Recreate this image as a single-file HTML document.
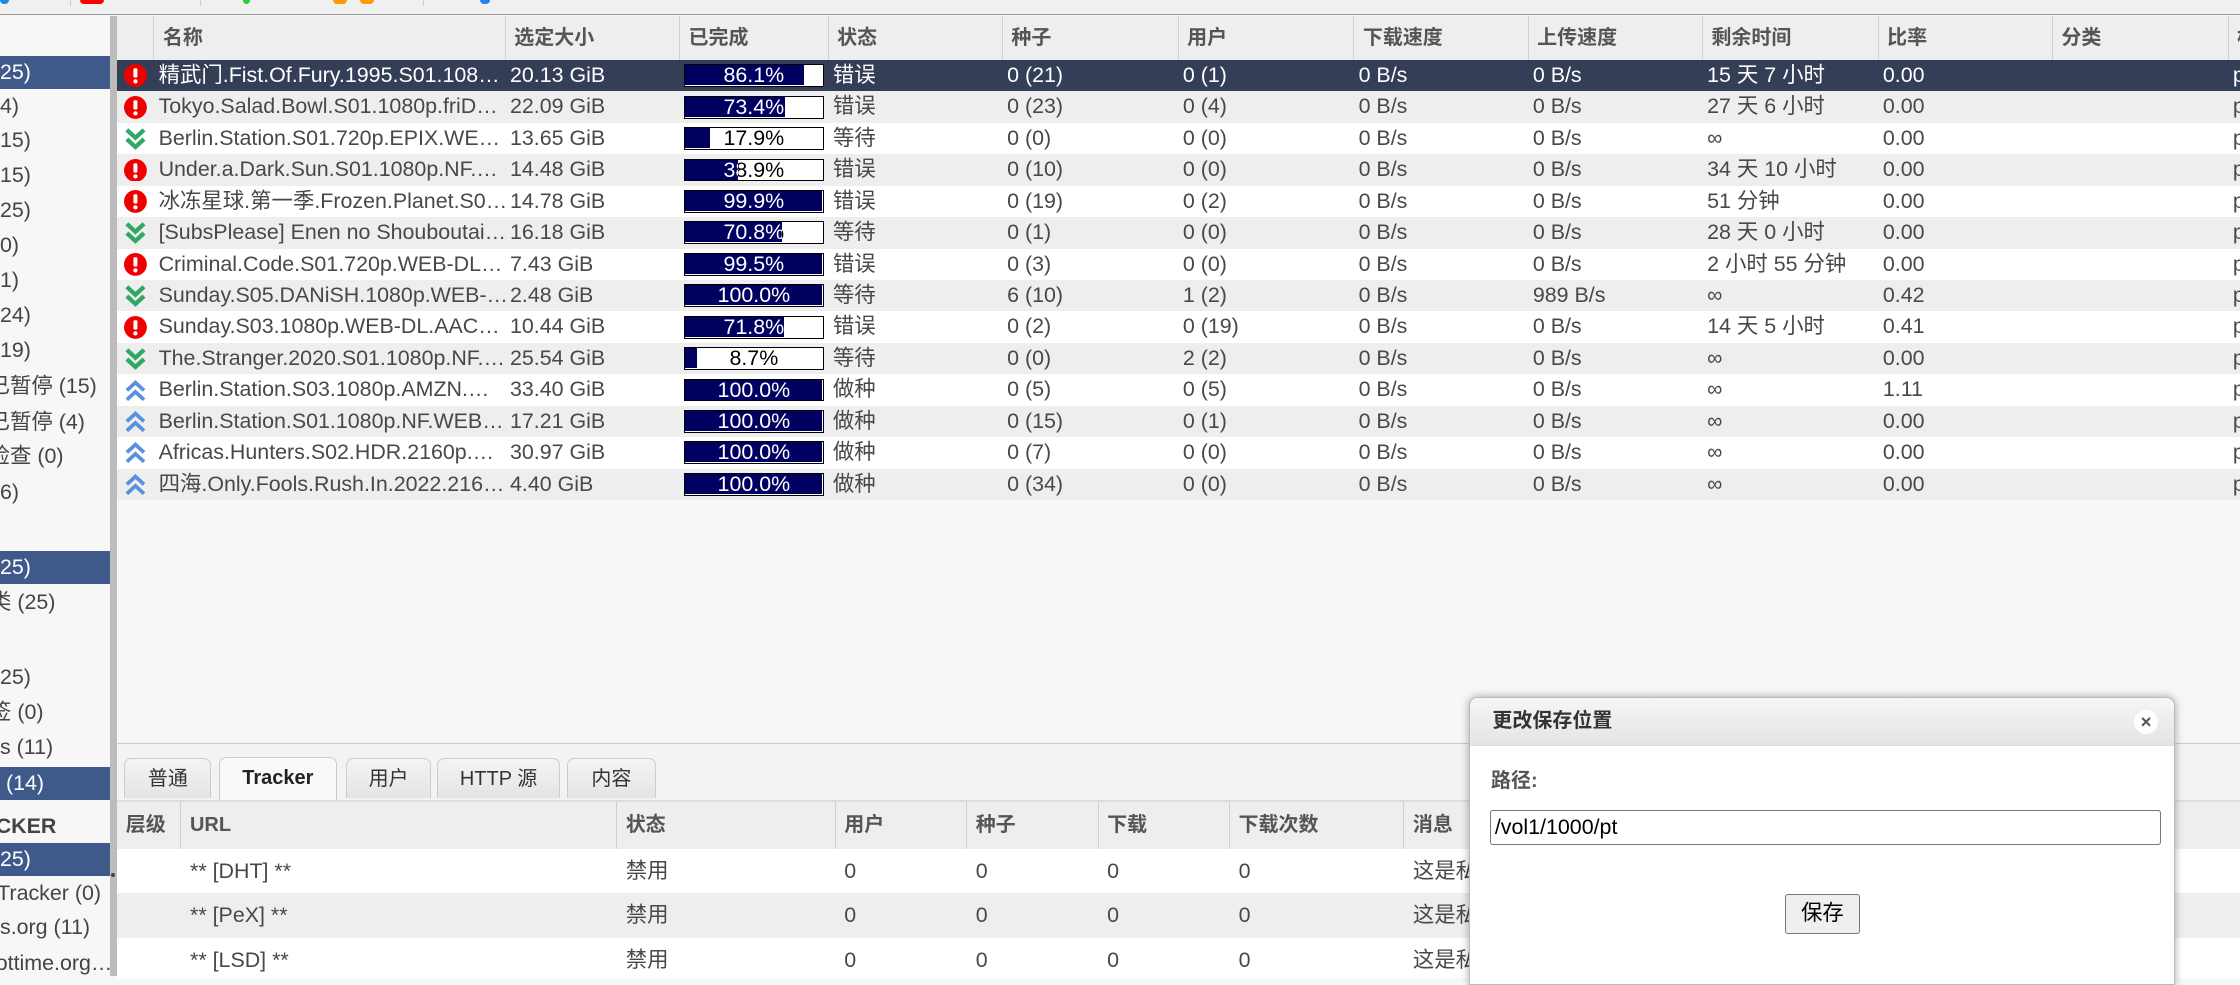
<!DOCTYPE html>
<html><head><meta charset="utf-8">
<style>
html,body{margin:0;padding:0;}
body{width:1568px;height:683px;overflow:hidden;zoom:1.428571;position:relative;background:#f7f7f7;font-family:"Liberation Sans","Noto Sans CJK SC",sans-serif;font-size:15px;color:#484848;}
.abs{position:absolute;}
#tb{left:0;top:0;width:1568px;height:10px;background:#f0f0f0;border-bottom:1px solid #999;}
#side{left:0;top:11px;width:77px;height:672px;background:#f7f7f7;overflow:hidden;}
#split{left:77px;top:11px;width:5px;height:672px;background:#bcbcbc;}
.si{position:absolute;left:0;width:77px;height:23px;line-height:23px;white-space:nowrap;color:#444;}
.si.sel{background:#3f5a8a;color:#fff;}
#main{left:82px;top:11px;width:1486px;height:509px;background:#f7f7f7;overflow:hidden;}
.hd{position:absolute;top:0;height:31px;line-height:31px;font-weight:bold;color:#555;background:#eee;border-right:1px solid #d0d0d0;box-sizing:border-box;padding-left:6px;white-space:nowrap;font-size:14px;}
.row{position:absolute;left:0;width:1486px;height:22px;line-height:22px;}
.row.o{background:#fff}.row.e{background:#eee}.row.s{background:#343f57;color:#fff}
.c{position:absolute;top:0;white-space:nowrap;overflow:hidden;}
.pb{position:absolute;left:397px;top:3px;width:98px;height:16px;border:1px solid #000;background:#fff;box-sizing:border-box;}
.pb .t{position:absolute;left:0;top:0;width:96px;text-align:center;line-height:14px;color:#000;font-size:15px;}
.pb .f{position:absolute;left:0;top:0;height:14px;background:#000060;overflow:hidden;}
.pb .f .t{color:#fff;}
.ic{position:absolute;left:5px;top:3px;width:16px;height:16px;}
#tabs{left:82px;top:520px;width:1486px;height:40px;background:#f3f3f3;border-top:1px solid #ccc;}
.tab{position:absolute;top:10px;height:28px;line-height:28px;text-align:center;background:linear-gradient(#f4f4f4,#e4e4e4);border:1px solid #ccc;border-bottom:none;border-radius:5px 5px 0 0;color:#333;box-sizing:border-box;font-size:14px;}
.tab.a{background:#f9f9f9;font-weight:bold;color:#222;top:9px;height:30px;}
#bt{left:82px;top:560px;width:1486px;height:123px;background:#fff;border-top:2px solid #ddd;overflow:hidden;}
.bh{position:absolute;top:0;height:33px;line-height:33px;background:#eee;font-weight:bold;color:#555;border-right:1px solid #d0d0d0;box-sizing:border-box;padding-left:6px;font-size:14px;}
.br{position:absolute;left:0;width:1486px;height:31px;line-height:31px;}
#dlg{left:1028px;top:488px;width:493px;height:200px;background:#fff;border:1px solid #bbb;border-radius:6px 6px 0 0;box-shadow:0 0 6px rgba(0,0,0,.35);overflow:hidden;}
</style></head><body>
<div id="tb" class="abs">
<div class="abs" style="left:0;top:0;width:6px;height:3px;background:#1e88e5;border-radius:0 0 3px 3px"></div>
<div class="abs" style="left:49px;top:0;width:1px;height:4px;background:#ccc"></div>
<div class="abs" style="left:56px;top:0;width:17px;height:3px;background:#f00;border-radius:0 0 3px 3px"></div>
<div class="abs" style="left:140px;top:0;width:1px;height:4px;background:#ccc"></div>
<div class="abs" style="left:170px;top:0;width:5px;height:3px;background:#3c3;border-radius:0 0 3px 3px"></div>
<div class="abs" style="left:233px;top:0;width:10px;height:3px;background:#f90;border-radius:0 0 3px 3px"></div>
<div class="abs" style="left:252px;top:0;width:10px;height:3px;background:#f90;border-radius:0 0 3px 3px"></div>
<div class="abs" style="left:296px;top:0;width:1px;height:4px;background:#ccc"></div>
<div class="abs" style="left:336px;top:0;width:7px;height:3px;background:#1e88e5;border-radius:0 0 3px 3px"></div>
</div>
<div id="side" class="abs">
<div class="si sel" style="top:28px">25)</div>
<div class="si" style="top:52px">4)</div>
<div class="si" style="top:76px">15)</div>
<div class="si" style="top:100px">15)</div>
<div class="si" style="top:125px">25)</div>
<div class="si" style="top:149px">0)</div>
<div class="si" style="top:174px">1)</div>
<div class="si" style="top:198px">24)</div>
<div class="si" style="top:223px">19)</div>
<div class="si" style="top:248px;left:-8px">已暂停 (15)</div>
<div class="si" style="top:273px;left:-8px">已暂停 (4)</div>
<div class="si" style="top:297px;left:-8px">检查 (0)</div>
<div class="si" style="top:322px">6)</div>
<div class="si sel" style="top:375px">25)</div>
<div class="si" style="top:399px;left:-7px">类 (25)</div>
<div class="si" style="top:452px">25)</div>
<div class="si" style="top:476px;left:-7px">签 (0)</div>
<div class="si" style="top:501px">s (11)</div>
<div class="si sel" style="top:526px">&nbsp;(14)</div>
<div class="si" style="top:556px;font-weight:bold;left:-3px">CKER</div>
<div class="si sel" style="top:579px">25)</div>
<div class="si" style="top:603px;left:-2px">Tracker (0)</div>
<div class="si" style="top:627px">s.org (11)</div>
<div class="si" style="top:652px;left:-3px">ottime.org…</div>
</div>
<div id="split" class="abs"><div class="abs" style="left:1px;top:600px;width:3px;height:10px;border-top:3px dotted #444"></div></div>
<div id="main" class="abs">
<div class="hd" style="left:0;width:26px"></div>
<div class="hd" style="left:26px;width:246px">名称</div>
<div class="hd" style="left:272px;width:122px">选定大小</div>
<div class="hd" style="left:394px;width:104px">已完成</div>
<div class="hd" style="left:498px;width:122px">状态</div>
<div class="hd" style="left:620px;width:123px">种子</div>
<div class="hd" style="left:743px;width:123px">用户</div>
<div class="hd" style="left:866px;width:122px">下载速度</div>
<div class="hd" style="left:988px;width:122px">上传速度</div>
<div class="hd" style="left:1110px;width:123px">剩余时间</div>
<div class="hd" style="left:1233px;width:122px">比率</div>
<div class="hd" style="left:1355px;width:123px">分类</div>
<div class="hd" style="left:1478px;width:20px">标</div>
<div id="rows"></div>
</div>
<div id="tabs" class="abs">
<div class="tab" style="left:5px;width:61px">普通</div>
<div class="tab a" style="left:71px;width:83px">Tracker</div>
<div class="tab" style="left:160px;width:60px">用户</div>
<div class="tab" style="left:224px;width:86px">HTTP 源</div>
<div class="tab" style="left:315px;width:62px">内容</div>
</div>
<div id="bt" class="abs">
<div class="bh" style="left:0;width:45px">层级</div>
<div class="bh" style="left:45px;width:305px">URL</div>
<div class="bh" style="left:350px;width:153px">状态</div>
<div class="bh" style="left:503px;width:92px">用户</div>
<div class="bh" style="left:595px;width:92px">种子</div>
<div class="bh" style="left:687px;width:92px">下载</div>
<div class="bh" style="left:779px;width:122px">下载次数</div>
<div class="bh" style="left:901px;width:600px">消息</div>
<div class="br" style="top:33px;background:#fff"><span class="c" style="left:51px">** [DHT] **</span><span class="c" style="left:356px">禁用</span><span class="c" style="left:509px">0</span><span class="c" style="left:601px">0</span><span class="c" style="left:693px">0</span><span class="c" style="left:785px">0</span><span class="c" style="left:907px">这是私有</span></div>
<div class="br" style="top:64px;background:#eee"><span class="c" style="left:51px">** [PeX] **</span><span class="c" style="left:356px">禁用</span><span class="c" style="left:509px">0</span><span class="c" style="left:601px">0</span><span class="c" style="left:693px">0</span><span class="c" style="left:785px">0</span><span class="c" style="left:907px">这是私有</span></div>
<div class="br" style="top:95px;background:#fff"><span class="c" style="left:51px">** [LSD] **</span><span class="c" style="left:356px">禁用</span><span class="c" style="left:509px">0</span><span class="c" style="left:601px">0</span><span class="c" style="left:693px">0</span><span class="c" style="left:785px">0</span><span class="c" style="left:907px">这是私有</span></div>
</div>
<div id="dlg" class="abs">
<div class="abs" style="left:0;top:0;width:493px;height:33px;background:linear-gradient(#f6f6f6,#e4e4e4);border-bottom:1px solid #ddd"></div>
<div class="abs" style="left:16px;top:0;line-height:33px;font-weight:bold;color:#333;font-size:14px">更改保存位置</div>
<div class="abs" style="left:465px;top:8px;width:17px;height:17px;border-radius:9px;background:#fff;text-align:center;line-height:17px;font-weight:bold;font-size:13px;color:#555">×</div>
<div class="abs" style="left:15px;top:46px;font-weight:bold;color:#555;font-size:14px">路径:</div>
<div class="abs" style="left:14px;top:78px;width:470px;height:25px;border:1px solid #767676;border-radius:2px;box-sizing:border-box;padding-left:3px;line-height:23px;color:#000;font-size:15px">/vol1/1000/pt</div>
<div class="abs" style="left:221px;top:137px;width:52px;height:28px;border:1px solid #767676;border-radius:2px;background:#efefef;box-sizing:border-box;text-align:center;line-height:26px;color:#000;font-size:15px">保存</div>
</div>
<script>
const R=[
["e","精武门.Fist.Of.Fury.1995.S01.108…","20.13 GiB",86.1,"错误","0 (21)","0 (1)","0 B/s","0 B/s","15 天 7 小时","0.00"],
["e","Tokyo.Salad.Bowl.S01.1080p.friD…","22.09 GiB",73.4,"错误","0 (23)","0 (4)","0 B/s","0 B/s","27 天 6 小时","0.00"],
["d","Berlin.Station.S01.720p.EPIX.WE…","13.65 GiB",17.9,"等待","0 (0)","0 (0)","0 B/s","0 B/s","∞","0.00"],
["e","Under.a.Dark.Sun.S01.1080p.NF.…","14.48 GiB",38.9,"错误","0 (10)","0 (0)","0 B/s","0 B/s","34 天 10 小时","0.00"],
["e","冰冻星球.第一季.Frozen.Planet.S0…","14.78 GiB",99.9,"错误","0 (19)","0 (2)","0 B/s","0 B/s","51 分钟","0.00"],
["d","[SubsPlease] Enen no Shouboutai…","16.18 GiB",70.8,"等待","0 (1)","0 (0)","0 B/s","0 B/s","28 天 0 小时","0.00"],
["e","Criminal.Code.S01.720p.WEB-DL…","7.43 GiB",99.5,"错误","0 (3)","0 (0)","0 B/s","0 B/s","2 小时 55 分钟","0.00"],
["d","Sunday.S05.DANiSH.1080p.WEB-…","2.48 GiB",100,"等待","6 (10)","1 (2)","0 B/s","989 B/s","∞","0.42"],
["e","Sunday.S03.1080p.WEB-DL.AAC…","10.44 GiB",71.8,"错误","0 (2)","0 (19)","0 B/s","0 B/s","14 天 5 小时","0.41"],
["d","The.Stranger.2020.S01.1080p.NF.…","25.54 GiB",8.7,"等待","0 (0)","2 (2)","0 B/s","0 B/s","∞","0.00"],
["u","Berlin.Station.S03.1080p.AMZN.…","33.40 GiB",100,"做种","0 (5)","0 (5)","0 B/s","0 B/s","∞","1.11"],
["u","Berlin.Station.S01.1080p.NF.WEB…","17.21 GiB",100,"做种","0 (15)","0 (1)","0 B/s","0 B/s","∞","0.00"],
["u","Africas.Hunters.S02.HDR.2160p.…","30.97 GiB",100,"做种","0 (7)","0 (0)","0 B/s","0 B/s","∞","0.00"],
["u","四海.Only.Fools.Rush.In.2022.216…","4.40 GiB",100,"做种","0 (34)","0 (0)","0 B/s","0 B/s","∞","0.00"]];
const IC={e:'<svg class="ic" viewBox="0 0 16 16"><circle cx="8" cy="8" r="8" fill="#e00"/><rect x="6.6" y="3" width="2.8" height="6.5" rx="1" fill="#fff"/><circle cx="8" cy="12.2" r="1.5" fill="#fff"/></svg>',
d:'<svg class="ic" viewBox="0 0 16 16"><path d="M2 2l6 5.5 6-5.5M2 8.5l6 5.5 6-5.5" fill="none" stroke="#2fa866" stroke-width="3"/></svg>',
u:'<svg class="ic" viewBox="0 0 16 16"><path d="M2 8l6-5.5 6 5.5M2 14.5l6-5.5 6 5.5" fill="none" stroke="#5b8fe0" stroke-width="2.6"/></svg>'};
const X=[272,394,498,620,743,866,988,1110,1233];
let h='';
R.forEach((r,i)=>{
 const cls=i==0?'s':(i%2?'e':'o');
 h+=`<div class="row ${cls}" style="top:${31+i*22}px">${IC[r[0]]}<span class="c" style="left:29px;width:243px">${r[1]}</span><span class="c" style="left:275px">${r[2]}</span>`;
 const w=Math.round(96*r[3]/100);
 const t=(r[3]==100?'100.0':r[3].toFixed(1))+'%';
 h+=`<div class="pb"><div class="t">${t}</div><div class="f" style="width:${w}px"><div class="t">${t}</div></div></div>`;
 const v=[r[4],r[5],r[6],r[7],r[8],r[9],r[10]];
 v.forEach((x,j)=>{h+=`<span class="c" style="left:${X[j+2]+3}px">${x}</span>`});
 h+=`<span class="c" style="left:1481px">p</span></div>`;
});
document.getElementById('rows').innerHTML=h;
</script>
</body></html>
